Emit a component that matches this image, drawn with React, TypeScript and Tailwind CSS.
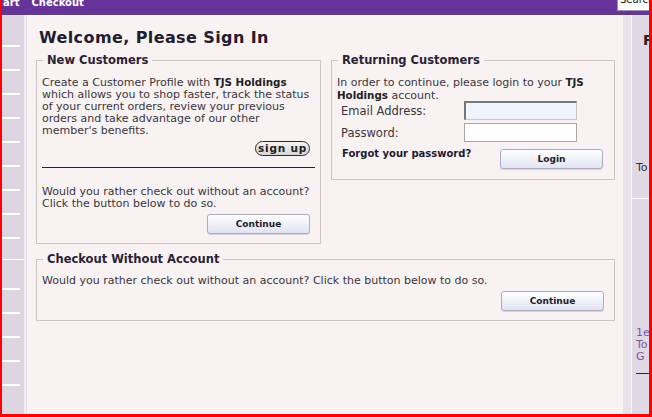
import React from 'react'

const dashes1 = [0, 1, 2, 3, 4, 5, 6, 7, 8]
const dashes2 = [0, 1, 2, 3, 4]

function BlueButton({ label, className = '' }: { label: string; className?: string }) {
  return (
    <button
      type="button"
      className={
        'flex h-[20px] w-[103px] items-center justify-center rounded-[3px] border border-[#a9abc9] bg-gradient-to-b from-[#ffffff] to-[#e1e3f1] text-[9px] font-bold leading-none text-[#1c1a2a] shadow-[0_1px_0_#d8d4dc] ' +
        className
      }
    >
      {label}
    </button>
  )
}

function Legend({ children }: { children: React.ReactNode }) {
  return (
    <legend className="ml-[1px] px-[4px] text-[11.5px] font-bold leading-[12px] text-[#2a2236]">{children}</legend>
  )
}

function B({ children }: { children: React.ReactNode }) {
  return <b className="text-[10.3px] text-[#222]">{children}</b>
}

export default function App() {
  return (
    <div className="flex h-[417px] w-[652px] flex-col overflow-hidden bg-[#ff0000] pb-[3px] pl-[2px] pr-[3px] font-['DejaVu_Sans',sans-serif] text-[#3a3640]">
      {/* top nav bar */}
      <div className="flex h-[15px] shrink-0 overflow-hidden bg-[#663399]">
        <div className="-mt-[3px] flex gap-[12px] pl-[1px] text-[10px] font-bold leading-[12px] text-white">
          <span>art</span>
          <span>Checkout</span>
        </div>
        <div className="ml-auto h-[11px] w-[32px] overflow-hidden border-b border-l border-[#9a9a9a] bg-white">
          <div className="-mt-[6px] pl-[2px] text-[10px] leading-[12px] text-[#111]">Search</div>
        </div>
      </div>

      <div className="flex flex-1 overflow-hidden">
        {/* left rail */}
        <div className="flex w-[22px] shrink-0 flex-col bg-[#ddd5e1] pt-[30px]">
          {dashes1.map((i) => (
            <div key={i} className="mb-[22px] h-[2px] w-[18px] bg-white" />
          ))}
          <div className="-mt-[2px] h-[1px] w-full bg-white" />
          <div className="pt-[28px]">
            {dashes2.map((i) => (
              <div key={i} className="mb-[22px] h-[2px] w-[18px] bg-white" />
            ))}
          </div>
        </div>
        <div className="w-[2px] shrink-0 bg-[#f1edf3]" />
        <div className="w-[1px] shrink-0 bg-[#e4dde7]" />

        {/* main */}
        <main className="w-[596px] shrink-0 bg-[#f8f2f2] pl-[9px] pr-[8px] pt-[13px]">
          <h1 className="ml-[3px] text-[16px] font-bold leading-[20px] tracking-[0.4px] text-[#211c30]">
            Welcome, Please Sign In
          </h1>

          <div className="mt-[6px] flex items-start gap-[10px]">
            <fieldset className="w-[285px] border border-[#cdc5c5] px-[5px] pb-[9px] pt-[10px]">
              <Legend>New Customers</Legend>
              <p className="text-[11px] leading-[12px]">
                Create a Customer Profile with <B>TJS Holdings</B>
                <br />
                which allows you to shop faster, track the status
                <br />
                of your current orders, review your previous
                <br />
                orders and take advantage of our other
                <br />
                member's benefits.
              </p>
              <div className="mt-[4px] flex justify-end">
                <button
                  type="button"
                  className="mr-[5px] flex h-[15px] w-[55px] items-center justify-center rounded-full border-[1.5px] border-[#2b2b2b] bg-gradient-to-b from-[#f4f4f4] to-[#d6d6d6] text-[10.5px] font-bold leading-none tracking-[0.8px] text-[#222]"
                >
                  sign up
                </button>
              </div>
              <div className="mt-[11px] h-[1px] bg-[#2b1b35]" />
              <p className="mt-[18px] text-[11px] leading-[12px]">
                Would you rather check out without an account?
                <br />
                Click the button below to do so.
              </p>
              <div className="mt-[4px] flex justify-end">
                <BlueButton label="Continue" className="mr-[5px]" />
              </div>
            </fieldset>

            <fieldset className="w-[284px] border border-[#cdc5c5] px-[5px] pb-[10px] pt-[10px]">
              <Legend>Returning Customers</Legend>
              <p className="text-[11px] leading-[12px]">
                In order to continue, please login to your <B>TJS</B>
                <br />
                <B>Holdings</B> account.
              </p>
              <div className="-mt-[1px] flex items-center">
                <label className="ml-[4px] w-[123px] text-[11.5px] leading-[14px]">Email Address:</label>
                <input
                  type="text"
                  className="h-[19px] w-[113px] border-b border-l-2 border-r border-t-2 border-b-[#c8c8c8] border-l-[#777] border-r-[#c8c8c8] border-t-[#777] bg-[#eef5fc] outline-none"
                />
              </div>
              <div className="mt-[3px] flex items-center">
                <label className="ml-[4px] w-[123px] text-[11.5px] leading-[14px]">Password:</label>
                <input type="password" className="h-[19px] w-[113px] border border-[#a8a8a8] bg-white outline-none" />
              </div>
              <div className="mt-[7px] flex items-start">
                <a className="ml-[5px] mt-[-1px] text-[10px] font-bold leading-[12px] text-[#241a30]">Forgot your password?</a>
                <BlueButton label="Login" className="ml-auto mr-[6px]" />
              </div>
            </fieldset>
          </div>

          <fieldset className="mt-[9px] w-[579px] border border-[#cdc5c5] px-[5px] pb-[9px] pt-[10px]">
            <Legend>Checkout Without Account</Legend>
            <p className="text-[11px] leading-[12px]">
              Would you rather check out without an account? Click the button below to do so.
            </p>
            <div className="mt-[4px] flex justify-end">
              <BlueButton label="Continue" className="mr-[5px]" />
            </div>
          </fieldset>
        </main>

        {/* right rail */}
        <div className="w-[8px] shrink-0 bg-[#e9e2ea]" />
        <div className="w-[1px] shrink-0 bg-[#faf7fa]" />
        <div className="flex w-[17px] shrink-0 flex-col overflow-hidden whitespace-nowrap bg-[#e0d8e4]">
          <div className="mt-[17px] pl-[11px] text-[14px] font-bold leading-[16px] text-[#222]">P</div>
          <div className="mt-[114px] pl-[4px] text-[11px] leading-[12px] text-[#333]">To</div>
          <div className="mt-[24px] h-[1px] w-full bg-[#fbf8fb]" />
          <div className="mt-[128px] pl-[4px] text-[11px] leading-[12px] text-[#7a5a9c]">
            <div>1e</div>
            <div>To</div>
            <div>G</div>
          </div>
          <div className="ml-[4px] mt-[10px] h-[1px] bg-[#2b2b2b]" />
        </div>
      </div>
    </div>
  )
}
